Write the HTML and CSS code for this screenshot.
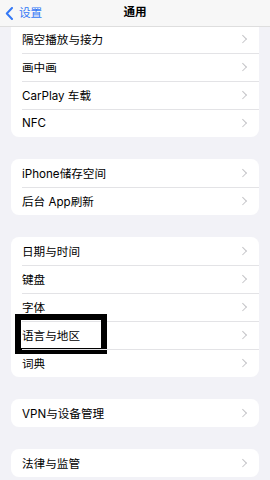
FILE: index.html
```html
<!DOCTYPE html>
<html lang="zh-CN">
<head>
  <meta charset="UTF-8" />
  <meta name="viewport" content="width=device-width, initial-scale=1.0"/>
  <title>通用</title>
  <link rel="stylesheet" href="styles.css">
</head>
<body>
  <header class="nav-bar">
    <a class="nav-back" href="#">
      <svg width="9" height="13" viewBox="0 0 9 13"><polyline points="7,1 1.8,6.5 7,12" fill="none" stroke="#3478f6" stroke-width="2" stroke-linecap="round" stroke-linejoin="round"/></svg>
      <span>设置</span>
    </a>
    <h1 class="nav-title">通用</h1>
  </header>

  <main class="settings">
    <ul class="group group-first">
      <li class="row">隔空播放与接力<span class="chevron"></span></li>
      <li class="row">画中画<span class="chevron"></span></li>
      <li class="row">CarPlay 车载<span class="chevron"></span></li>
      <li class="row">NFC<span class="chevron"></span></li>
    </ul>

    <ul class="group">
      <li class="row">iPhone储存空间<span class="chevron"></span></li>
      <li class="row">后台 App刷新<span class="chevron"></span></li>
    </ul>

    <ul class="group group-marked">
      <li class="row">日期与时间<span class="chevron"></span></li>
      <li class="row">键盘<span class="chevron"></span></li>
      <li class="row">字体<span class="chevron"></span></li>
      <li class="row">语言与地区<span class="chevron"></span><span class="mark-box"></span></li>
      <li class="row">词典<span class="chevron"></span></li>
    </ul>

    <ul class="group">
      <li class="row">VPN与设备管理<span class="chevron"></span></li>
    </ul>

    <ul class="group">
      <li class="row">法律与监管<span class="chevron"></span></li>
    </ul>
  </main>
</body>
</html>
```

FILE: styles.css
```css
* {
  box-sizing: border-box;
  margin: 0;
  padding: 0;
}

body {
  background-color: #f2f2f7;
  color: #000;
  font-family: Inter, "Noto Sans CJK SC", sans-serif;
  font-size: 11.6px;
  width: 270px;
  height: 480px;
  overflow: hidden;
}

/* nav bar sits over the scrolled list */
.nav-bar {
  position: fixed;
  top: 0;
  left: 0;
  right: 0;
  height: 27px;
  z-index: 2;
  background-color: #f7f7f7;
  border-bottom: 1px solid #dedede;
  display: flex;
  align-items: center;
  justify-content: center;
}

.nav-back {
  position: absolute;
  left: 5px;
  top: 7px;
  display: flex;
  align-items: center;
  gap: 5px;
  color: #3478f6;
  text-decoration: none;
  line-height: 13px;
}

.nav-title {
  font-size: 11.6px;
  font-weight: 600;
  line-height: 1;
}

.settings {
  padding: 25px 11px 0;
}

.group {
  list-style: none;
  background-color: #fff;
  border-radius: 8px;
  margin-bottom: 22px;
}

.group-first {
  border-radius: 0 0 8px 8px;
}

.row {
  position: relative;
  height: 28px;
  display: flex;
  align-items: center;
  padding: 0 12px 0 11px;
  white-space: nowrap;
}

.row + .row::before {
  content: "";
  position: absolute;
  top: 0;
  left: 11px;
  right: 0;
  height: 1px;
  background-color: #e3e3e6;
}

.chevron {
  margin-left: auto;
  width: 5.5px;
  height: 5.5px;
  margin-right: 2px;
  border-top: 1.1px solid #c4c4c7;
  border-right: 1.1px solid #c4c4c7;
  transform: rotate(45deg);
}

.mark-box {
  position: absolute;
  left: 4px;
  top: -7px;
  width: 92px;
  height: 40px;
  border: 6px solid #000;
}
```
